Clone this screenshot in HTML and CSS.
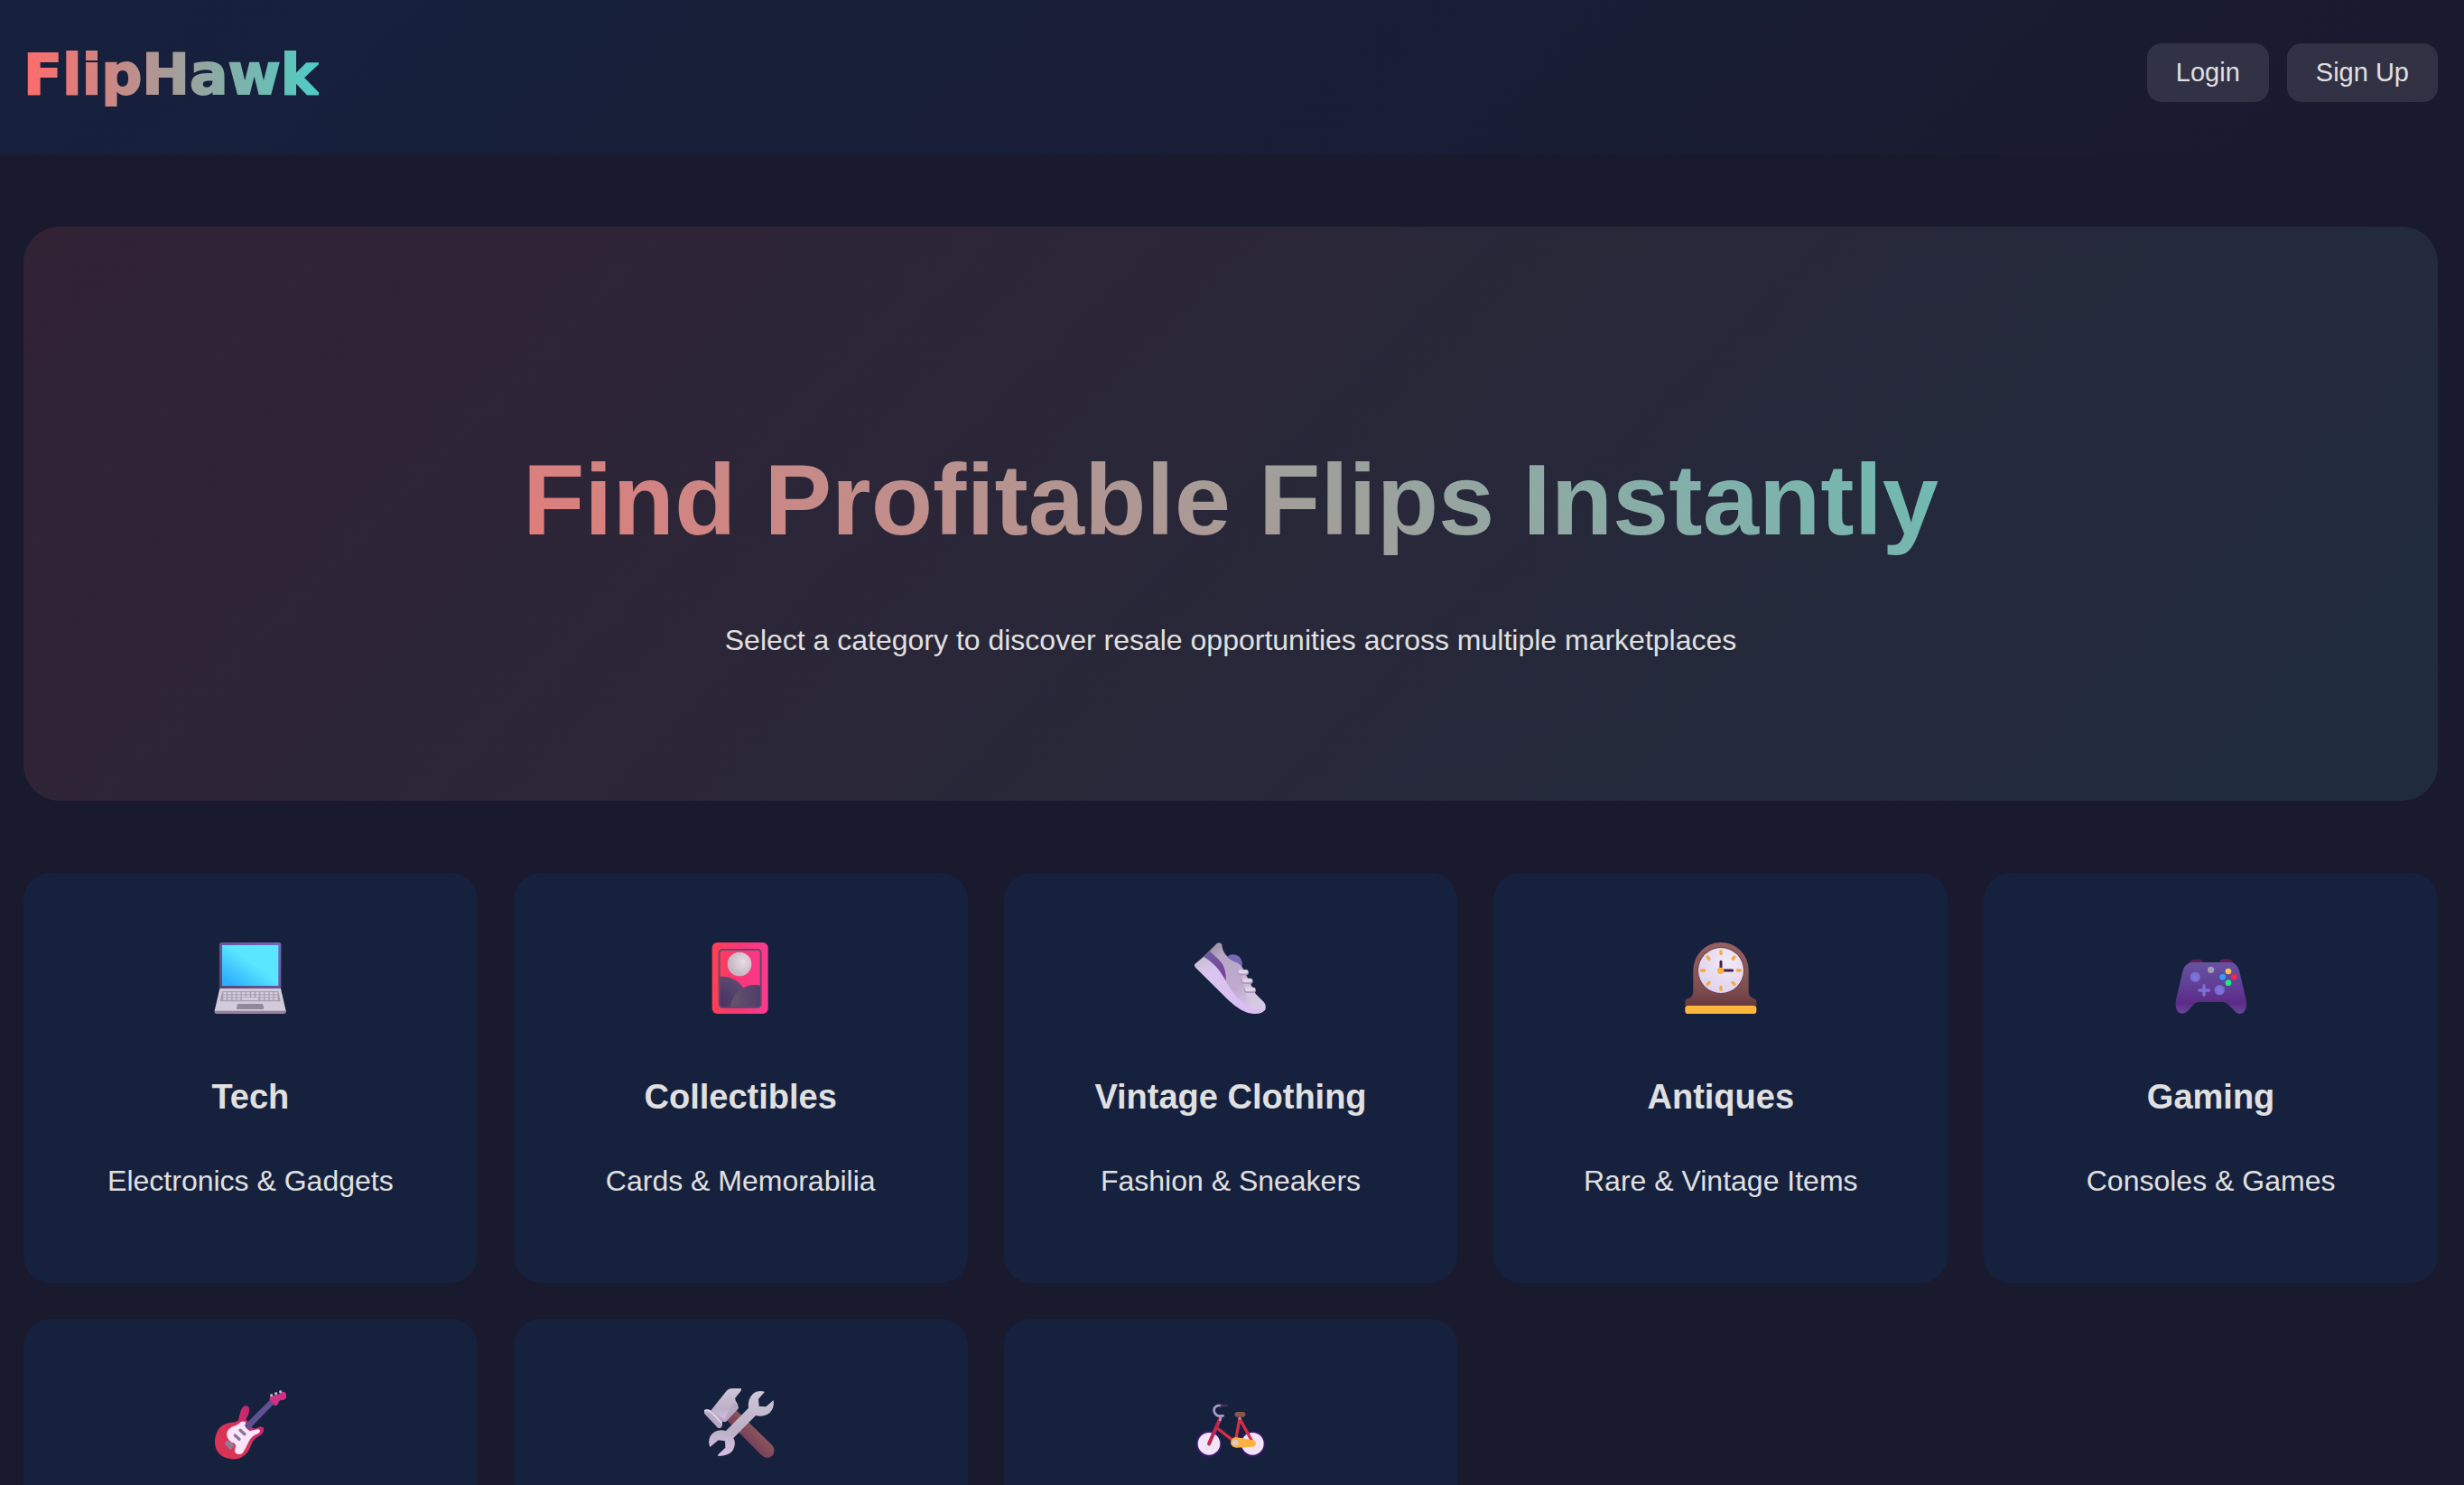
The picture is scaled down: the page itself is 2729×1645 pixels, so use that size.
FILE: index.html
```html
<!DOCTYPE html>
<html lang="en">
<head>
<meta charset="utf-8">
<meta name="viewport" content="width=device-width, initial-scale=1">
<title>FlipHawk</title>
<link rel="stylesheet" href="styles.css">
</head>
<body>
<header class="header">
  <div class="logo">FlipHawk</div>
  <nav class="auth">
    <button type="button" class="auth-btn">Login</button>
    <button type="button" class="auth-btn">Sign Up</button>
  </nav>
</header>
<main class="main">
  <section class="hero">
    <h1 class="hero-title">Find Profitable Flips Instantly</h1>
    <p class="hero-text">Select a category to discover resale opportunities across multiple marketplaces</p>
  </section>
  <section class="grid">
    <article class="card">
      <svg class="icon" viewBox="52 42 240 240" aria-hidden="true">
        <defs>
          <linearGradient id="scr" x1="0" y1="1" x2="1" y2="0"><stop offset=".1" stop-color="#2fb0ff"/><stop offset=".55" stop-color="#5ae6ff"/></linearGradient>
          <linearGradient id="lid" x1="0" y1="1" x2="1" y2="0"><stop offset="0" stop-color="#5a4570"/><stop offset="1" stop-color="#7468c0"/></linearGradient>
          <pattern id="keys" x="82" y="206" width="15.4" height="9.6" patternUnits="userSpaceOnUse"><rect x="1" y="1" width="11" height="7" rx="1" fill="#dcd6e4"/></pattern>
        </defs>
        <rect x="70" y="42" width="205" height="156" rx="8" fill="url(#lid)"/>
        <rect x="79" y="51" width="187" height="135" fill="url(#scr)"/>
        <path d="M71 195H274L291 269Q291 278 285 278H60Q54 278 54 269Z" fill="#d2cbdc"/>
        <path d="M54 269H291Q291 278 285 278H60Q54 278 54 269Z" fill="#968299"/>
        <path d="M80 204H266L273 235Q273 238 270 238H75Q72 238 72 235Z" fill="#a59bad"/>
        <path d="M82 206H264L266 235H80Z" fill="url(#keys)"/>
        <rect x="143" y="225" width="58" height="10" fill="#a59bad"/><rect x="145" y="226" width="54" height="7" fill="#dcd6e4"/>
        <path d="M130 246H214L218 260Q218 264 214 264H130Q126 264 127 260Z" fill="#918899"/>
      </svg>
      <h3 class="card-title">Tech</h3>
      <p class="card-text">Electronics &amp; Gadgets</p>
    </article>
    <article class="card">
      <svg class="icon" viewBox="61 42 240 240" aria-hidden="true">
        <defs>
          <linearGradient id="fc"><stop offset="0" stop-color="#ff4052"/><stop offset=".5" stop-color="#fb3577"/><stop offset="1" stop-color="#f83b90"/></linearGradient>
          <radialGradient id="moon" cx=".65" cy=".4" r=".7"><stop offset="0" stop-color="#e8dbe4"/><stop offset="1" stop-color="#bdb1bc"/></radialGradient>
          <radialGradient id="hillA" cx=".4" cy=".6" r=".6"><stop offset="0" stop-color="#473061"/><stop offset="1" stop-color="#5b4870"/></radialGradient>
          <linearGradient id="hillB"><stop offset="0" stop-color="#65546f"/><stop offset=".6" stop-color="#513d68"/><stop offset="1" stop-color="#30203f"/></linearGradient>
          <clipPath id="fcIn"><rect x="112" y="67" width="136" height="190" rx="11"/></clipPath>
        </defs>
        <rect x="87" y="42" width="186" height="237" rx="18" fill="url(#fc)"/>
        <g clip-path="url(#fcIn)"><circle cx="122" cy="236" r="81" fill="url(#hillA)"/><circle cx="228" cy="263" r="80" fill="url(#hillB)"/></g>
        <circle cx="178" cy="114" r="40" fill="url(#moon)"/>
        <rect x="111" y="66" width="138" height="192" rx="11" fill="none" stroke="#664769" stroke-width="6"/>
      </svg>
      <h3 class="card-title">Collectibles</h3>
      <p class="card-text">Cards &amp; Memorabilia</p>
    </article>
    <article class="card">
      <svg class="icon" viewBox="69 42 240 240" aria-hidden="true">
        <defs>
          <linearGradient id="shoe" x1="0" y1="0" x2=".7" y2="1"><stop offset="0" stop-color="#85808b"/><stop offset=".25" stop-color="#b7a8c4"/><stop offset=".7" stop-color="#bfaad0"/><stop offset="1" stop-color="#d7cae4"/></linearGradient>
          <linearGradient id="sole" x1="0" y1="0" x2=".5" y2="1"><stop offset="0" stop-color="#c5bdcb"/><stop offset=".3" stop-color="#dbc5ee"/><stop offset="1" stop-color="#d9bdf3"/></linearGradient>
          <linearGradient id="patch" x1="0" y1="0" x2=".6" y2="1"><stop offset="0" stop-color="#6f62a5"/><stop offset="1" stop-color="#774099"/></linearGradient>
        </defs>
        <path d="M178 88Q198 75 218 89Q230 103 227 122L204 123Z" fill="#7769b2"/>
        <path d="M99 89L144 44Q155 40 160 49Q160 66 172 82Q188 104 208 109Q220 112 231 130L272 213L300 241Q309 253 303 268Q270 275 235 258Z" fill="url(#shoe)"/>
        <path d="M224 135L272 213L289 232Q276 254 257 244Q239 232 234 186Z" fill="#d5cbdc" opacity=".6"/>
        <path d="M99 89L118 70L149 98Q177 124 173 174Z" fill="url(#patch)"/>
        <path d="M99 89L70 114Q66 120 75 128L181 233Q226 276 264 279Q298 281 305 261Q249 274 204 217Q181 189 167 159Q142 114 99 89Z" fill="url(#sole)"/>
        <g stroke-linecap="round" stroke-width="18"><path d="M220 142H240M234 171H254M243 201H264" stroke="#ac96c3"/><path d="M220 139H240M234 168H254M243 198H264" stroke="#ded6e5" stroke-width="13"/></g>
      </svg>
      <h3 class="card-title">Vintage Clothing</h3>
      <p class="card-text">Fashion &amp; Sneakers</p>
    </article>
    <article class="card">
      <svg class="icon" viewBox="62 42 240 240" aria-hidden="true">
        <defs>
          <linearGradient id="wood" x1="0" y1="0" x2="0" y2="1"><stop offset="0" stop-color="#966160"/><stop offset=".7" stop-color="#805050"/><stop offset="1" stop-color="#683840"/></linearGradient>
          <radialGradient id="face" cx=".65" cy=".3" r=".8"><stop offset="0" stop-color="#f2eaf6"/><stop offset="1" stop-color="#dfd0ee"/></radialGradient>
        </defs>
        <path d="M90 134A92 92 0 0 1 274 134V208Q276 224 292 229Q300 231 300 238V253H63V238Q63 231 72 229Q88 224 90 208Z" fill="url(#wood)"/>
        <circle cx="182" cy="135" r="78" fill="#714150"/><circle cx="182" cy="135" r="75" fill="url(#face)"/>
        <rect x="63" y="252" width="237" height="27" rx="10" fill="#ffb63d"/>
        <path d="M182 72V79M182 190V199M118 135H127M237 135H246M137 90L143 97M227 90L221 97M137 181L143 175M227 181L221 175" stroke="#f5aa3d" stroke-width="10" stroke-linecap="round"/>
        <path d="M182 133V106M184 135H220" stroke="#402050" stroke-width="9" stroke-linecap="round" fill="none"/>
        <circle cx="181" cy="136" r="11" fill="#ffaf3b"/>
      </svg>
      <h3 class="card-title">Antiques</h3>
      <p class="card-text">Rare &amp; Vintage Items</p>
    </article>
    <article class="card">
      <svg class="icon" viewBox="56 42 240 240" aria-hidden="true">
        <defs>
          <linearGradient id="pad" x1="0" y1="0" x2="0" y2="1"><stop offset="0" stop-color="#6653a0"/><stop offset=".5" stop-color="#603c94"/><stop offset=".8" stop-color="#5b2a87"/><stop offset="1" stop-color="#67489a"/></linearGradient>
          <radialGradient id="stick"><stop offset="0" stop-color="#827add"/><stop offset="1" stop-color="#7369d0"/></radialGradient>
        </defs>
        <path d="M100 112Q108 98 125 98H139Q146 99 149 110ZM203 110Q205 98 216 97H231Q246 99 254 115Z" fill="#601e58"/>
        <path d="M116 108H235Q260 108 269 134L292 233Q297 266 280 277Q265 284 251 267L231 247Q225 240 215 240H136Q126 240 119 247L99 269Q83 284 69 275Q54 264 59 233L82 134Q91 108 116 108Z" fill="url(#pad)"/>
        <circle cx="123" cy="157" r="17" fill="url(#stick)"/><circle cx="204" cy="200" r="17" fill="url(#stick)"/>
        <path d="M152 185V216M137 201H168" stroke="#7c70d7" stroke-width="10" stroke-linecap="round"/>
        <circle cx="175" cy="133" r="11" fill="#a699b2"/><circle cx="233" cy="138" r="10" fill="#ffc052"/><circle cx="214" cy="157" r="10" fill="#319fff"/><circle cx="252" cy="157" r="10" fill="#f32652"/><circle cx="233" cy="176" r="10" fill="#1fe782"/>
      </svg>
      <h3 class="card-title">Gaming</h3>
      <p class="card-text">Consoles &amp; Games</p>
    </article>
    <article class="card">
      <svg class="icon" viewBox="52 42 240 240" aria-hidden="true">
        <defs><linearGradient id="gtr" x1="0" y1="1" x2="1" y2="0"><stop offset=".4" stop-color="#d93355"/><stop offset=".85" stop-color="#c02874"/></linearGradient></defs>
        <path d="M133 148Q136 131 141 116Q149 97 161 100Q172 105 169 120Q165 135 158 144L180 174Q191 178 199 171Q211 165 217 174Q220 189 205 199Q187 208 179 222Q171 243 163 255Q143 279 111 277Q73 274 59 244Q48 210 66 179Q81 158 111 155Q126 155 133 148Z" fill="url(#gtr)"/>
        <path d="M134 160Q144 147 157 154V172L171 184L196 178Q205 177 205 184Q205 190 197 193Q179 199 168 218Q158 240 147 257Q137 265 125 258Q118 249 124 236Q126 223 110 221Q92 208 95 189Q100 171 124 166Z" fill="#fae5fa"/>
        <path d="M153 165L238 80L251 94L167 180Z" fill="#5f5091"/>
        <path d="M237 80Q235 68 247 67L268 61Q276 51 287 54Q296 61 293 72Q287 83 276 80Q266 83 265 94Q259 103 251 97Z" fill="#cf2f85"/>
        <path d="M139 181L154 194M122 198L136 211" stroke="#897792" stroke-width="10" stroke-linecap="round"/><path d="M98 213L121 232L107 247L87 226Z" fill="#8d7e99"/>
        <g fill="#bcb2ca"><circle cx="243" cy="65" r="5"/><circle cx="258" cy="59" r="5"/><circle cx="273" cy="53" r="5"/></g>
      </svg>
    </article>
    <article class="card">
      <svg class="icon" viewBox="61 42 240 240" aria-hidden="true">
        <defs>
          <linearGradient id="han" x1="1" y1="0" x2="0" y2="1"><stop offset=".3" stop-color="#936059"/><stop offset=".75" stop-color="#6d305b"/></linearGradient>
          <linearGradient id="met" x1="0" y1="0" x2="0" y2="1"><stop offset="0" stop-color="#cfc6d8"/><stop offset=".6" stop-color="#bcb1c6"/><stop offset="1" stop-color="#d7bde9"/></linearGradient>
        </defs>
        <g transform="translate(-8)">
        <path d="M143 147L174 113L295 231Q304 241 300 258Q292 274 275 272Q266 271 257 262Z" fill="url(#han)"/>
        <path d="M92 114L143 50Q149 42 160 42H192L191 50L171 75Q173 86 179 92L183 108L140 153L126 151Z" fill="url(#met)"/>
        <path d="M97 119L137 145L167 89L183 104L143 151L127 152Z" fill="#b5a9c2"/>
        <path d="M66 122Q69 110 82 112Q98 115 117 135Q131 148 129 164Q126 176 115 174Z" fill="#b6aac5"/>
        <path d="M70 117Q79 110 99 127L126 157" fill="none" stroke="#ddd5e4" stroke-width="6"/>
        <path d="M141 183L216 107Q212 79 230 61Q245 47 270 53L249 77L251 101L274 103L299 81Q303 108 286 124Q266 139 240 132L166 207Q176 224 165 246Q153 267 115 267V262L139 239L138 217L116 214L88 237Q80 219 90 199Q107 175 141 183Z" fill="url(#met)"/>
        </g>
      </svg>
    </article>
    <article class="card">
      <svg class="icon" viewBox="69 42 240 240" aria-hidden="true">
        <g fill="#f1e4f9" stroke="#3b1768" stroke-width="6"><circle cx="117" cy="226" r="40"/><circle cx="262" cy="226" r="40"/></g>
        <path d="M144 174L196 214M219 143L207 207M219 143L261 219" stroke="#d42f49" stroke-width="10" stroke-linecap="round" fill="none"/>
        <path d="M117 226L154 143" stroke="#bd2950" stroke-width="12" stroke-linecap="round"/>
        <path d="M154 147L157 133H164M157 133Q142 136 135 121Q130 105 146 99H160" stroke="#a79bc9" stroke-width="8" stroke-linecap="round" fill="none"/>
        <path d="M159 99H176" stroke="#45314f" stroke-width="8" stroke-linecap="round"/>
        <path d="M219 137V146" stroke="#9e93b6" stroke-width="9"/>
        <rect x="203" y="120" width="35" height="17" rx="7" fill="#8c5549"/>
        <path d="M207 204L262 214Q273 216 273 226Q272 235 262 236L207 239Q190 237 189 222Q191 205 207 204Z" fill="#ffb13e"/><circle cx="205" cy="222" r="10" fill="#d4ced4"/>
      </svg>
    </article>
  </section>
</main>
</body>
</html>
```
FILE: styles.css
```css
* {
  box-sizing: border-box;
  margin: 0;
  padding: 0;
}

body {
  height: 100vh;
  overflow: hidden;
  background: #1a1a2e;
  color: #e0e0e0;
  font-family: Arial, "Liberation Sans", sans-serif;
  font-size: 32px;
  line-height: 51px;
}

.header {
  display: flex;
  justify-content: space-between;
  align-items: center;
  padding: 26px 29px 37px 26px;
  background: linear-gradient(135deg, #16213e, #1a1a2e);
}

.logo {
  padding-top: 6px;
  font-family: "Arial Black", "DejaVu Sans", sans-serif;
  font-size: 63px;
  font-weight: 900;
  line-height: 102px;
  background: linear-gradient(90deg, #ff6b6b, #4ecdc4);
  background-clip: text;
  -webkit-background-clip: text;
  -webkit-text-stroke: 2px transparent;
  color: transparent;
}

.auth {
  display: flex;
  gap: 20px;
}

.auth-btn {
  padding: 16px 32px;
  border: 0;
  border-radius: 16px;
  background: rgba(255, 255, 255, 0.1);
  color: inherit;
  font-family: inherit;
  font-size: 29px;
  line-height: 33px;
  cursor: pointer;
}

.main {
  display: flex;
  flex-direction: column;
  gap: 80px;
  padding: 80px 29px 80px 26px;
}

.hero {
  padding: 213px 128px 152px;
  border-radius: 40px;
  background: linear-gradient(135deg, rgba(255, 107, 107, 0.1), rgba(78, 205, 196, 0.1));
  text-align: center;
}

.hero-title {
  margin-bottom: 41px;
  font-size: 112px;
  line-height: 179px;
  background: linear-gradient(45deg, #ff6b6b, #4ecdc4);
  background-clip: text;
  -webkit-background-clip: text;
  color: transparent;
}

.grid {
  display: grid;
  grid-template-columns: repeat(auto-fit, minmax(480px, 1fr));
  grid-auto-rows: 1fr;
  gap: 40px;
}

.card {
  padding: 77px 40px 87px;
  border-radius: 30px;
  background: #16213e;
  text-align: center;
}

.icon {
  display: block;
  width: 80px;
  height: 80px;
  margin: 0 auto 61px;
}

.card-title {
  margin-bottom: 37px;
  font-size: 38px;
  line-height: 61px;
}
```
